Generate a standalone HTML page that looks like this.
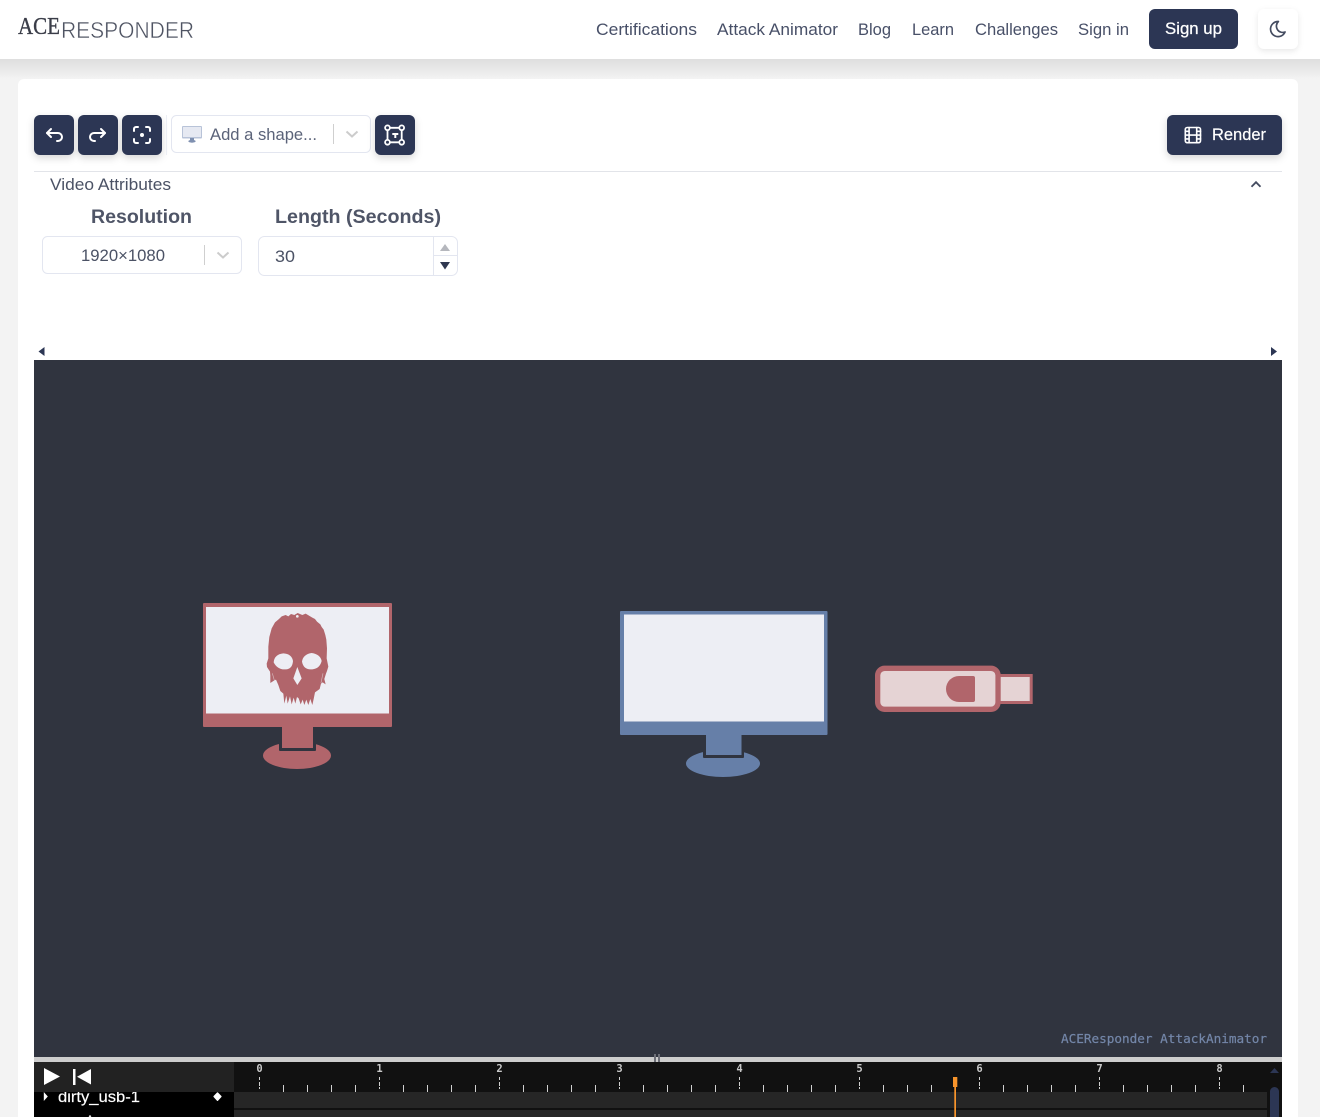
<!DOCTYPE html>
<html lang="en">
<head>
<meta charset="utf-8">
<title>AttackAnimator</title>
<style>
html,body{margin:0;padding:0;background:#f3f3f3;width:1320px;height:1117px;overflow:hidden}
svg{display:block;position:absolute;left:0;top:0}
text{font-family:"Liberation Sans",sans-serif;white-space:pre}
.nav{font-size:16.5px;fill:#485068}
.ic{fill:none;stroke:#fff;stroke-width:2;stroke-linecap:round;stroke-linejoin:round}
.btn{fill:#2c3654;filter:drop-shadow(0 3px 4px rgba(0,0,0,.16))}
.num{font-family:"DejaVu Sans Mono",monospace;font-size:10.5px;font-weight:bold;fill:#c8c8c8;text-anchor:middle}
</style>
</head>
<body>
<svg width="1320" height="1117" viewBox="0 0 1320 1117" xmlns="http://www.w3.org/2000/svg">
<defs>
<linearGradient id="hs" x1="0" y1="0" x2="0" y2="1"><stop offset="0" stop-color="#dedede"/><stop offset="1" stop-color="#f3f3f3"/></linearGradient>
<pattern id="minor" x="259" y="1085" width="120" height="7" patternUnits="userSpaceOnUse">
<rect x="24" width="1" height="7" fill="#d0d0d0"/><rect x="48" width="1" height="7" fill="#d0d0d0"/><rect x="72" width="1" height="7" fill="#d0d0d0"/><rect x="96" width="1" height="7" fill="#d0d0d0"/>
</pattern>
<pattern id="major" x="259" y="1077" width="120" height="12" patternUnits="userSpaceOnUse">
<rect width="1" height="3" y="0" fill="#d0d0d0"/><rect width="1" height="4" y="5" fill="#d0d0d0"/><rect width="1" height="2" y="10" fill="#d0d0d0"/>
</pattern>
</defs>

<rect width="1320" height="1117" fill="#f3f3f3"/>
<rect y="59" width="1320" height="20" fill="url(#hs)"/>

<!-- card -->
<rect x="18" y="79" width="1280" height="1050" rx="6" fill="#fff"/>

<!-- header -->
<rect width="1320" height="59" fill="#fff"/>
<text x="18" y="34" font-size="24" textLength="42" lengthAdjust="spacingAndGlyphs" fill="#3a3d48" stroke="#3a3d48" stroke-width=".35" style="font-family:'Liberation Serif',serif">ACE</text>
<text x="61" y="38" font-size="23.500" textLength="133" lengthAdjust="spacingAndGlyphs" fill="#4f5463" stroke="#fff" stroke-width=".45">RESPONDER</text>

<text class="nav" x="596" y="35" textLength="101" lengthAdjust="spacingAndGlyphs">Certifications</text>
<text class="nav" x="717" y="35" textLength="121" lengthAdjust="spacingAndGlyphs">Attack Animator</text>
<text class="nav" x="858" y="35" textLength="33" lengthAdjust="spacingAndGlyphs">Blog</text>
<text class="nav" x="912" y="35" textLength="42" lengthAdjust="spacingAndGlyphs">Learn</text>
<text class="nav" x="975" y="35" textLength="83" lengthAdjust="spacingAndGlyphs">Challenges</text>
<text class="nav" x="1078" y="35" textLength="51" lengthAdjust="spacingAndGlyphs">Sign in</text>

<rect x="1149" y="9" width="89" height="40" rx="6" fill="#2c3654"/>
<text x="1165" y="34" font-size="16.5" textLength="57" lengthAdjust="spacingAndGlyphs" fill="#fff" stroke="#fff" stroke-width=".25">Sign up</text>

<rect x="1258" y="9" width="40" height="40" rx="6" fill="#fff" style="filter:drop-shadow(0 2px 3px rgba(0,0,0,.09))"/>
<g transform="translate(1268,19) scale(.84)" fill="none" stroke="#444c60" stroke-width="2" stroke-linecap="round" stroke-linejoin="round"><path d="M12 3c.132 0 .263 0 .393 0a7.5 7.5 0 0 0 7.92 12.446a9 9 0 1 1 -8.313 -12.454z"/></g>

<!-- toolbar -->
<rect class="btn" x="34" y="115" width="40" height="40" rx="6"/>
<g class="ic" transform="translate(42,123)"><path d="M9 14l-4 -4l4 -4"/><path d="M5 10h11a4 4 0 1 1 0 8h-1"/></g>
<rect class="btn" x="78" y="115" width="40" height="40" rx="6"/>
<g class="ic" transform="translate(86,123)"><path d="M15 14l4 -4l-4 -4"/><path d="M19 10h-11a4 4 0 1 0 0 8h1"/></g>
<rect class="btn" x="122" y="115" width="40" height="40" rx="6"/>
<g class="ic" transform="translate(130,123)"><path d="M12 12m-1 0a1 1 0 1 0 2 0a1 1 0 1 0 -2 0"/><path d="M4 8v-2a2 2 0 0 1 2 -2h2"/><path d="M4 16v2a2 2 0 0 0 2 2h2"/><path d="M16 4h2a2 2 0 0 1 2 2v2"/><path d="M16 20h2a2 2 0 0 0 2 -2v-2"/></g>
<rect x="166" y="115" width="1" height="40" fill="#eceef4"/>

<rect x="171.500" y="115.500" width="199" height="37" rx="5" fill="#fff" stroke="#e3e6f0"/>
<rect x="182" y="126" width="20" height="12.500" rx="1" fill="#b8c3d8"/>
<rect x="183" y="127" width="18" height="10" fill="#e6e9f2"/>
<rect x="190" y="138" width="4" height="3" fill="#7f90b0"/>
<ellipse cx="192" cy="141.300" rx="3.700" ry="1.400" fill="#7f90b0"/>
<text x="210" y="140" font-size="16.5" textLength="107" lengthAdjust="spacingAndGlyphs" fill="#5b6379">Add a shape...</text>
<rect x="333" y="124" width="1" height="20" fill="#cfcfcf"/>
<path d="M346.500 131.500l5.500 5 5.500-5" fill="none" stroke="#cccccc" stroke-width="2"/>

<rect class="btn" x="375" y="115" width="40" height="40" rx="6"/>
<g fill="none" stroke="#fff" stroke-width="1.800">
<circle cx="387.500" cy="127.800" r="2.400"/><circle cx="401.700" cy="127.800" r="2.400"/><circle cx="387.500" cy="142.300" r="2.400"/><circle cx="401.700" cy="142.300" r="2.400"/>
<path d="M389.900 127.800h9.400M389.900 142.300h9.400M387.500 130.200v9.700M401.700 130.200v9.700"/>
<path d="M392.300 134h6M395.300 134v4" stroke-width="2"/>
</g>

<rect class="btn" x="1167" y="115" width="115" height="40" rx="6"/>
<g class="ic" transform="translate(1181.500,123.700) scale(.95)" style="stroke-width:1.700"><rect x="4" y="4" width="16" height="16" rx="2"/><path d="M8 4v16M16 4v16M4 8h4M4 16h4M4 12h16M16 8h4M16 16h4"/></g>
<text x="1212" y="140" font-size="16.5" textLength="54" lengthAdjust="spacingAndGlyphs" fill="#fff" stroke="#fff" stroke-width=".2">Render</text>

<!-- attributes -->
<rect x="34" y="171" width="1248" height="1" fill="#e2e4e9"/>
<text x="50" y="190" font-size="16.500" textLength="121" lengthAdjust="spacingAndGlyphs" fill="#4b5265">Video Attributes</text>
<path d="M1251.500 186.700l4.500-4.500 4.500 4.500" fill="none" stroke="#444c60" stroke-width="1.800"/>

<text x="91" y="223" font-size="19" font-weight="bold" textLength="101" lengthAdjust="spacingAndGlyphs" fill="#4f5567">Resolution</text>
<text x="275" y="223" font-size="19" font-weight="bold" textLength="166" lengthAdjust="spacingAndGlyphs" fill="#4f5567">Length (Seconds)</text>

<rect x="42.500" y="236.500" width="199" height="37" rx="5" fill="#fff" stroke="#e3e6f0"/>
<text x="81" y="261" font-size="16.500" textLength="84" lengthAdjust="spacingAndGlyphs" fill="#4b5265">1920×1080</text>
<rect x="204" y="245" width="1" height="20" fill="#cfcfcf"/>
<path d="M217.500 252.500l5.500 5 5.500-5" fill="none" stroke="#cccccc" stroke-width="2"/>

<rect x="258.500" y="236.500" width="199" height="39" rx="6" fill="#fff" stroke="#e3e6f0"/>
<text x="275" y="262" font-size="16.500" textLength="20" lengthAdjust="spacingAndGlyphs" fill="#4b5265">30</text>
<path d="M433.500 237v38M433.500 255.500h24" stroke="#e3e6f0" fill="none"/>
<path d="M440 251l5-7 5 7z" fill="#b5b7bd"/>
<path d="M440 262h10l-5 7.500z" fill="#2f3750"/>

<!-- h-scroll arrows -->
<path d="M44.500 347v9l-6-4.500z" fill="#2c3654"/>
<path d="M1271 347v9l6-4.500z" fill="#2c3654"/>

<!-- canvas -->
<rect x="34" y="360" width="1248" height="697" fill="#30343f"/>

<!-- compromised monitor -->
<rect x="203" y="603" width="189" height="124" rx="1" fill="#b1656b"/>
<rect x="206" y="607" width="183" height="106.500" fill="#edeef4"/>
<ellipse cx="297" cy="755.500" rx="34" ry="13.500" fill="#b1656b"/>
<rect x="279" y="727" width="37" height="24" rx="1" fill="#30343f"/>
<rect x="282" y="727" width="31" height="21" fill="#b1656b"/>
<g transform="translate(255,605) scale(.3333)" fill="#b1656b">
<path d="M92 30L100 34 108 27 118 30 128 24 142 30 152 26 162 32 172 38 180 42 186 50 196 58 200 66 206 74 211 90 214 104 216 130 215 160 220 185 216 198 213 206 208 222 212 238 203 232 198 236 194 252 180 262 176 282 172 300 166 282 160 300 154 284 148 300 143 284 137 298 131 280 126 276 121 296 116 278 110 298 105 274 98 296 94 272 88 296 85 266 76 258 70 240 63 224 55 228 46 234 46 212 45 200 36 186 35 176 40 160 40 125 43 96 50 70 60 52 72 42 80 34z"/>
<g fill="#edeef4">
<path d="M56 172Q58 148 85 145 110 146 114 168 112 193 92 193 68 195 56 172z"/>
<path d="M141 170Q144 148 170 144 196 148 200 168 194 191 172 193 146 196 141 170z"/>
<path d="M127 186L140 220 127 240 115 220z"/>
<circle cx="127" cy="34" r="4"/>
</g>
<path d="M52 205L62 240M204 205L198 234" stroke="#edeef4" stroke-width="2" opacity=".6" fill="none"/>
</g>

<!-- target monitor -->
<rect x="620" y="611" width="207.500" height="124" rx="1" fill="#667fa8"/>
<rect x="624" y="614.500" width="200" height="107" fill="#edeef4"/>
<ellipse cx="723" cy="763.500" rx="37" ry="13.500" fill="#667fa8"/>
<rect x="703" y="735" width="41" height="23" rx="1" fill="#30343f"/>
<rect x="706" y="735" width="35.500" height="20" fill="#667fa8"/>

<!-- usb -->
<rect x="998" y="675.500" width="33.200" height="27" fill="#e5d3d4" stroke="#b1656b" stroke-width="3"/>
<rect x="877.650" y="668.300" width="120.400" height="41" rx="7" fill="#e5d3d4" stroke="#b1656b" stroke-width="5.300"/>
<path d="M959 676h14a2 2 0 0 1 2 2v22a2 2 0 0 1-2 2h-14a13 13 0 0 1 0-26z" fill="#b1656b"/>

<text x="1061" y="1043" style="font-family:'DejaVu Sans Mono',monospace" font-size="12.700" textLength="206" fill="#7386a8" stroke="#7386a8" stroke-width=".2">ACEResponder AttackAnimator</text>

<!-- timeline -->
<rect x="34" y="1057" width="1248" height="5" fill="#cdcdcd"/>
<rect x="654" y="1054" width="2" height="8" fill="#6d6f78"/>
<rect x="658" y="1054" width="2" height="8" fill="#6d6f78"/>
<rect x="34" y="1062" width="200" height="30" fill="#222"/>
<rect x="34" y="1092" width="200" height="25" fill="#000"/>
<rect x="234" y="1062" width="1048" height="55" fill="#111"/>
<rect x="234" y="1092" width="1033" height="16" fill="#262626"/>
<rect x="234" y="1110" width="1033" height="7" fill="#262626"/>

<rect x="259" y="1085" width="1000" height="7" fill="url(#minor)"/>
<rect x="259" y="1077" width="970" height="12" fill="url(#major)"/>
<text class="num" x="259.500" y="1072">0</text>
<text class="num" x="379.500" y="1072">1</text>
<text class="num" x="499.500" y="1072">2</text>
<text class="num" x="619.500" y="1072">3</text>
<text class="num" x="739.500" y="1072">4</text>
<text class="num" x="859.500" y="1072">5</text>
<text class="num" x="979.500" y="1072">6</text>
<text class="num" x="1099.500" y="1072">7</text>
<text class="num" x="1219.500" y="1072">8</text>

<path d="M44 1068l16 8.500-16 8.500z" fill="#fff"/>
<rect x="73" y="1069" width="2.500" height="16" fill="#fff"/>
<path d="M91 1069v15.500l-14-7.750z" fill="#fff"/>

<svg x="34" y="1092" width="200" height="25" viewBox="34 1092 200 25">
<text x="58" y="1102" font-size="15.500" textLength="82" lengthAdjust="spacingAndGlyphs" fill="#fff" stroke="#fff" stroke-width=".15">dirty_usb-1</text>
<circle cx="90" cy="1116.500" r="1.200" fill="#ddd"/>
</svg>
<path d="M43.800 1092v9l4-4.500z" fill="#fff"/>
<path d="M217.500 1093l3.400 3.500-3.400 3.800-3.400-3.800z" fill="#fff" stroke="#fff" stroke-width="1.400" stroke-linejoin="round"/>

<rect x="954.300" y="1085" width="1.700" height="32" fill="#f7942b"/>
<rect x="953" y="1077" width="4.300" height="10" fill="#f7942b"/>

<path d="M1270 1073l4.500-5 4.500 5z" fill="#2c3654"/>
<path d="M1270 1117v-25.500a4.500 4.500 0 0 1 9 0v25.500z" fill="#2c3654"/>
</svg>
</body>
</html>
